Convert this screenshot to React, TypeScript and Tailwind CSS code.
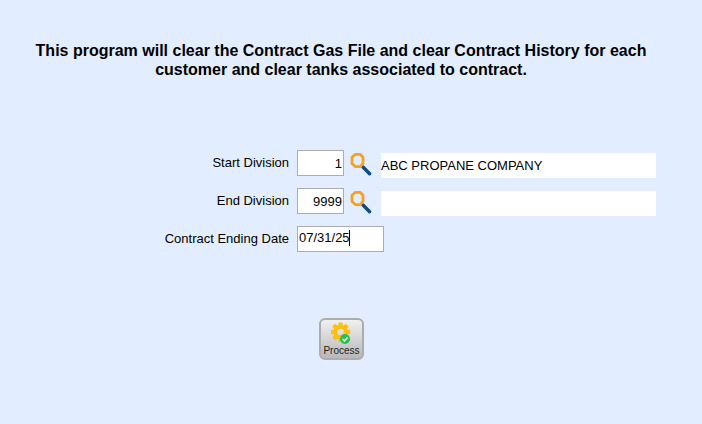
import * as React from "react";

const GEAR_TEETH = [0, 45, 90, 135, 180, 225, 270, 315];

const SearchIcon = () => (
  <svg width="22" height="24" viewBox="0 0 22 24" fill="none" aria-hidden="true">
    <path d="M13 15 L19.6 21.8" stroke="#0f4c81" strokeWidth="3.4" strokeLinecap="round" />
    <path
      d="M5.4 2.3 H10 L13 5.3 V11.4 L10.2 14.6 H5.2 L2 11.4 V5.3 Z"
      stroke="#f6a11f"
      strokeWidth="2.8"
      strokeLinejoin="round"
    />
  </svg>
);

const ProcessIcon = () => (
  <svg width="22" height="22" viewBox="0 0 22 22" aria-hidden="true">
    <g transform="translate(9.5 10)" fill="#fdc010">
      {GEAR_TEETH.map((angle) => (
        <path key={angle} d="M-2.5 -5.5 L-1.9 -9.6 H1.9 L2.5 -5.5 Z" transform={`rotate(${angle})`} />
      ))}
      <circle r="5.3" fill="none" stroke="#fdc010" strokeWidth="4" />
    </g>
    <circle cx="14" cy="17" r="5" fill="#27c04a" />
    <path d="M11.6 17 L13.4 18.8 L16.6 15.4" fill="none" stroke="#fff" strokeWidth="1.5" />
  </svg>
);

type DivisionRowProps = {
  id: string;
  label: string;
  value: string;
  onChange: (value: string) => void;
  company: string;
};

const DivisionRow = ({ id, label, value, onChange, company }: DivisionRowProps) => (
  <div className="grid grid-cols-[289px_1fr] gap-2">
    <label htmlFor={id} className="text-right leading-[26px]">
      {label}
    </label>
    <div className="flex">
      <input
        id={id}
        value={value}
        onChange={(e) => onChange(e.target.value)}
        className="h-[26px] w-[47px] border border-[#abadb3] bg-white pr-px text-right outline-none"
      />
      <button type="button" aria-label={`Search ${label}`} className="ml-1.5 mt-0.5 h-6 cursor-pointer">
        <SearchIcon />
      </button>
      <output htmlFor={id} className="ml-[9px] mt-[3px] h-[25px] flex-1 bg-white leading-[25px]">
        {company}
      </output>
    </div>
  </div>
);

const ClearContracts = () => {
  const [startDivision, setStartDivision] = React.useState("1");
  const [endDivision, setEndDivision] = React.useState("9999");
  const [endingDate, setEndingDate] = React.useState("07/31/25");

  return (
    <main className="min-h-screen bg-[#e2eeff] pt-[41px] font-['Liberation_Sans',Arial,sans-serif] text-[13px] text-black">
      <h1 className="mx-auto max-w-[640px] pr-5 text-center text-base leading-[19px] font-bold">
        This program will clear the Contract Gas File and clear Contract History for each customer and
        clear tanks associated to contract.
      </h1>

      <form onSubmit={(e) => e.preventDefault()}>
        <div className="mt-[71px] flex flex-col gap-2.5 pr-[46px]">
          <DivisionRow
            id="start-division"
            label="Start Division"
            value={startDivision}
            onChange={setStartDivision}
            company="ABC PROPANE COMPANY"
          />
          <DivisionRow
            id="end-division"
            label="End Division"
            value={endDivision}
            onChange={setEndDivision}
            company=""
          />
          <div className="grid grid-cols-[289px_1fr] gap-2">
            <label htmlFor="ending-date" className="text-right leading-[26px]">
              Contract Ending Date
            </label>
            <div className="relative">
              <input
                id="ending-date"
                value={endingDate}
                onChange={(e) => setEndingDate(e.target.value)}
                className="h-[26px] w-[87px] border border-[#abadb3] bg-white pb-1 pl-px outline-none"
              />
              {/* text cursor */}
              <span className="absolute top-1 left-[52px] h-4 w-px bg-black" />
            </div>
          </div>
        </div>

        <div className="mt-[66px] pl-[319px]">
          <button
            type="submit"
            className="flex h-[42px] w-[45px] cursor-pointer flex-col items-center rounded-md border-2 border-[#adadad] bg-linear-to-b from-[#f0f0f0] to-[#b8b8b8] pt-0.5"
          >
            <ProcessIcon />
            <span className="text-[10px] leading-[14px] text-[#222]">Process</span>
          </button>
        </div>
      </form>
    </main>
  );
};

export default ClearContracts;
